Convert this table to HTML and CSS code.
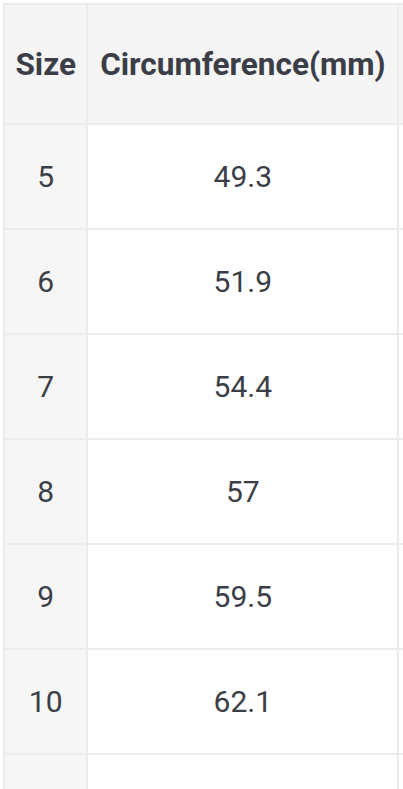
FILE: index.html
```html
<!DOCTYPE html>
<html lang="en">
<head>
<meta charset="utf-8">
<title>Ring size chart</title>
<link rel="stylesheet" href="styles.css">
</head>
<body>
<table class="chart">
  <thead>
    <tr>
      <th class="col-size">Size</th>
      <th class="col-circ">Circumference(mm)</th>
      <th class="col-extra"></th>
    </tr>
  </thead>
  <tbody>
    <tr><td class="size">5</td><td>49.3</td><td></td></tr>
    <tr><td class="size">6</td><td>51.9</td><td></td></tr>
    <tr><td class="size">7</td><td>54.4</td><td></td></tr>
    <tr><td class="size">8</td><td>57</td><td></td></tr>
    <tr><td class="size">9</td><td>59.5</td><td></td></tr>
    <tr><td class="size">10</td><td>62.1</td><td></td></tr>
    <tr><td class="size"></td><td></td><td></td></tr>
  </tbody>
</table>
</body>
</html>
```
FILE: styles.css
```css
html, body {
  margin: 0;
  padding: 0;
  background: #ffffff;
  overflow: hidden;
}

body {
  width: 403px;
  height: 789px;
  font-family: Roboto, "Liberation Sans", sans-serif;
  color: #3b3e46;
}

.chart {
  margin: 3px 0 0 3px;
  border-collapse: separate;
  border-spacing: 2px;
  background: #ececec;
  table-layout: fixed;
  width: 700px;
}

.chart th,
.chart td {
  padding: 0;
  text-align: center;
  vertical-align: middle;
  background: #ffffff;
}

.chart th {
  height: 118px;
  background: #f5f5f6;
  font-size: 31.5px;
  font-weight: 700;
  white-space: nowrap;
}

.chart td {
  height: 103px;
  font-size: 30px;
  font-weight: 400;
}

.chart td.size {
  background: #f6f6f7;
}

.col-size { width: 81px; }
.col-circ { width: 307px; }
.col-extra { width: 300px; }
```
